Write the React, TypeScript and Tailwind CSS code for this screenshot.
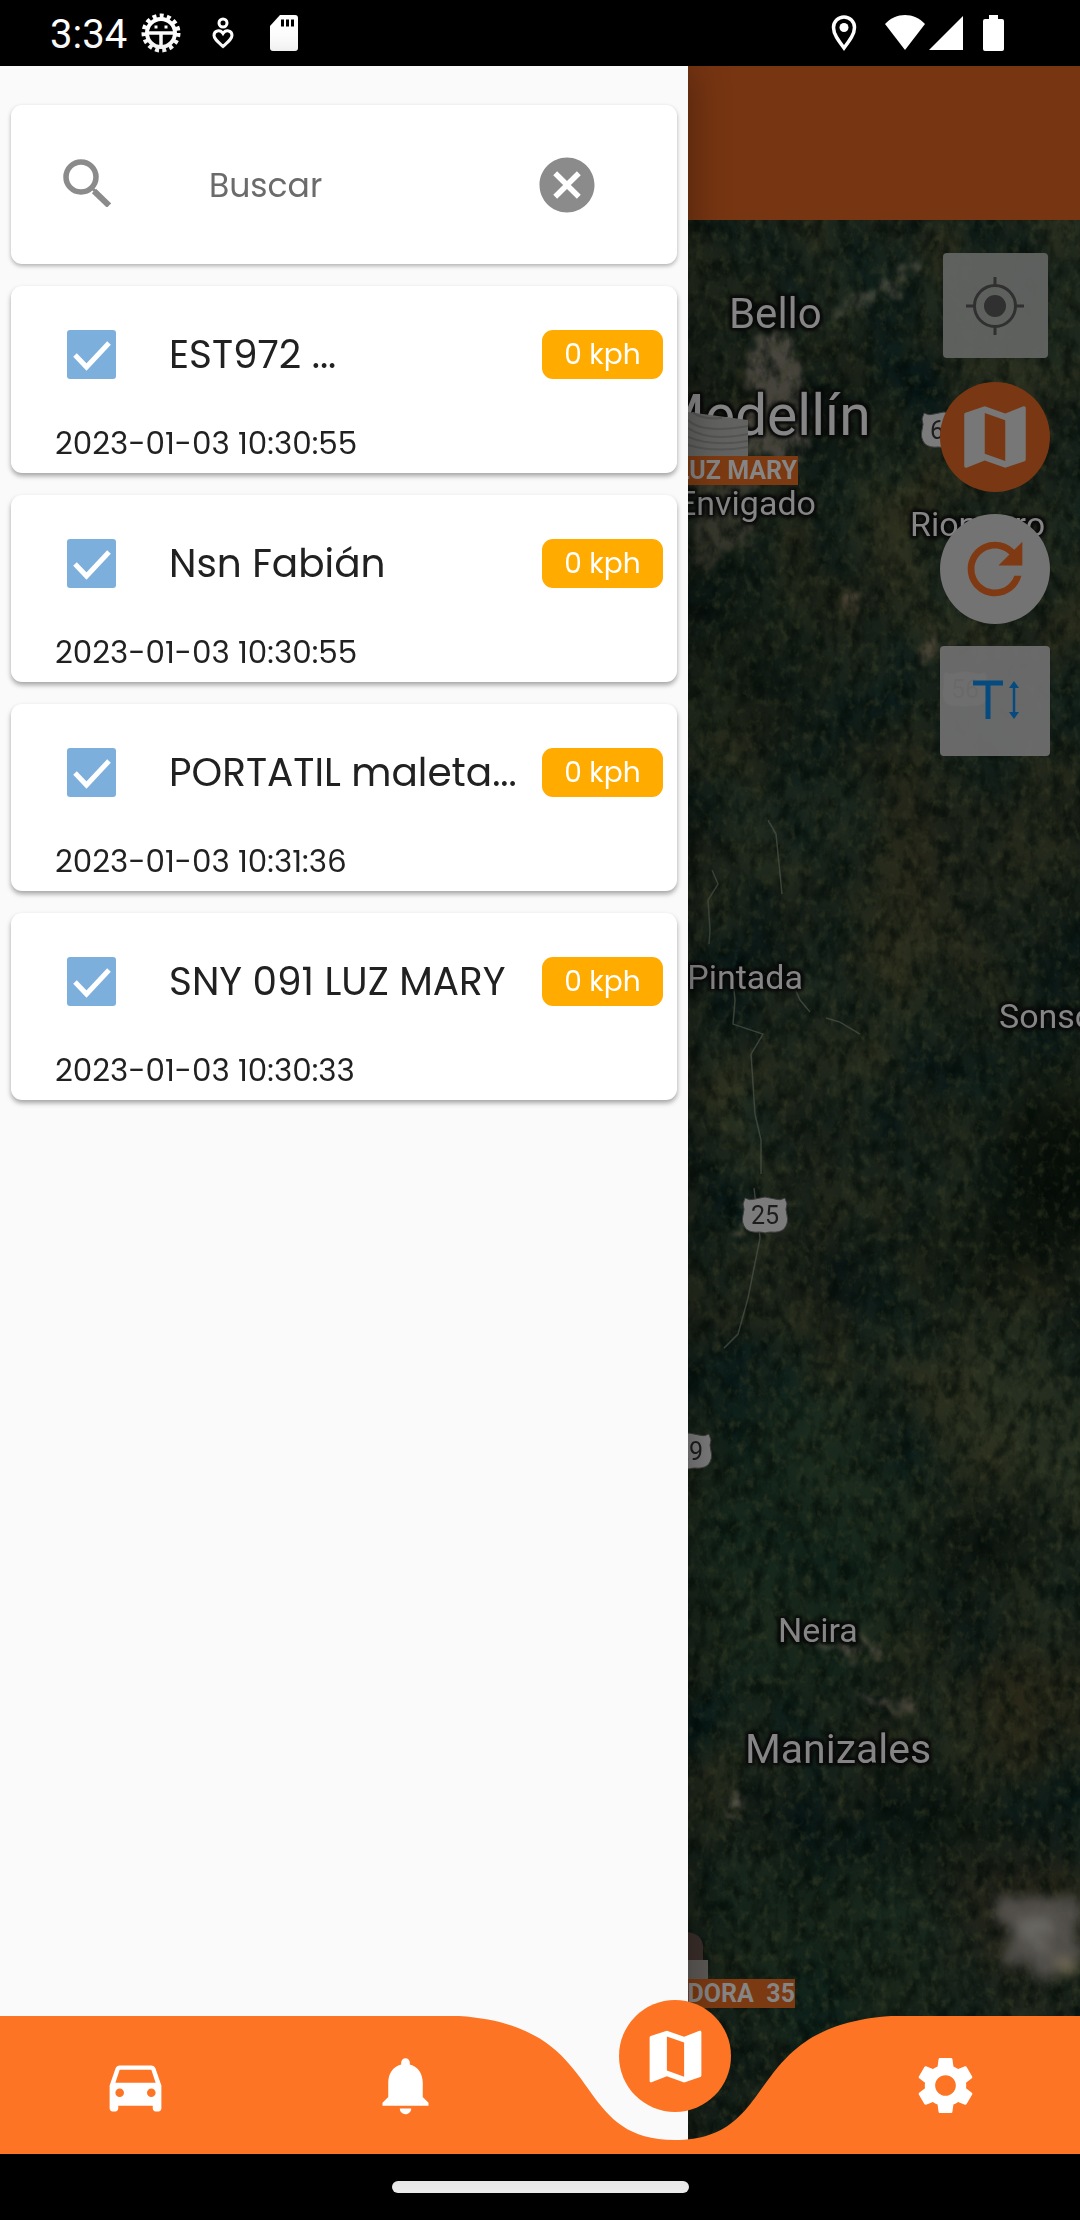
import { useState } from "react";
import type { ReactNode } from "react";
import { MdCancel, MdDirectionsCar, MdMap, MdNotifications, MdRefresh, MdSettings } from "react-icons/md";

type Device = { name: string; speed: string; time: string };

const devices: Device[] = [
  { name: "EST972 ...", speed: "0 kph", time: "2023-01-03 10:30:55" },
  { name: "Nsn Fabián", speed: "0 kph", time: "2023-01-03 10:30:55" },
  { name: "PORTATIL maleta...", speed: "0 kph", time: "2023-01-03 10:31:36" },
  { name: "SNY 091 LUZ MARY", speed: "0 kph", time: "2023-01-03 10:30:33" },
];

function StatusBar() {
  return (
    <header className="flex h-[66px] shrink-0 items-center justify-between bg-black pr-[76px] pl-[50px] text-white">
      <div className="flex items-center">
        <span className="pt-1 font-[Roboto,sans-serif] text-[40px] leading-none">3:34</span>
        <svg className="ml-[14px] size-10" viewBox="0 0 40 40" fill="none" stroke="currentColor">
          <circle cx="20" cy="20" r="17" strokeWidth="5" strokeDasharray="3.9 3.220" />
          <circle cx="20" cy="20" r="14" strokeWidth="4" />
          <path d="M7 20h26M20 20v13" strokeWidth="3.500" />
          <path d="M13.500 14h3M23.500 14h3" strokeWidth="3" />
        </svg>
        <svg className="ml-[31px] h-8 w-[22px]" viewBox="0 0 22 32" fill="none" stroke="currentColor" strokeWidth="3">
          <circle cx="11" cy="6" r="4" />
          <path d="M11 29.500C5 24 2 21.500 2 18.500c0-5 6-6.500 9-2 3-4.500 9-3 9 2 0 3-3 5.500-9 11z" />
        </svg>
        <svg className="ml-9 h-9 w-7" viewBox="0 0 28 36" fill="currentColor">
          <path d="M10 0h15a3 3 0 0 1 3 3v30a3 3 0 0 1-3 3H3a3 3 0 0 1-3-3V11z" />
          <path d="M11 4.500h3v7h-3zM16 4.500h3v7h-3zM21 4.500h3v7h-3z" fill="#000" />
        </svg>
      </div>
      <div className="flex items-center">
        <svg className="h-9 w-[26px]" viewBox="0 0 26 36" fill="none" stroke="currentColor">
          <path d="M13 33C7 25 2.500 19 2.500 12.500a10.500 10.500 0 0 1 21 0C23.500 19 19 25 13 33z" strokeWidth="3.500" />
          <circle cx="13" cy="12.500" r="4.500" fill="currentColor" stroke="none" />
        </svg>
        <svg className="ml-7 h-9 w-10" viewBox="0 0 40 36" fill="currentColor">
          <path d="M0 9C11-3 29-3 40 9L20 35z" />
        </svg>
        <svg className="ml-1 h-9 w-[34px]" viewBox="0 0 34 36" fill="currentColor">
          <path d="M34 1v34H0z" />
        </svg>
        <svg className="ml-5 h-9 w-[21px]" viewBox="0 0 21 36" fill="currentColor">
          <path d="M6 0h9v4h4a2 2 0 0 1 2 2v28a2 2 0 0 1-2 2H2a2 2 0 0 1-2-2V6a2 2 0 0 1 2-2h4z" />
        </svg>
      </div>
    </header>
  );
}

function SearchCard() {
  const [query, setQuery] = useState("");
  return (
    <form className="flex h-[159px] items-center rounded-[11px] bg-white pr-[77px] pl-[52px] shadow-[0_2px_4px_rgba(0,0,0,0.3)]">
      <svg className="mb-1 size-[48px] shrink-0" viewBox="0 0 48 48" fill="none" stroke="#8b8b8b">
        <circle cx="18" cy="18" r="15" strokeWidth="5.500" />
        <path d="M31 32l15 14.500" strokeWidth="6" />
        <path d="M28 28l4 4" strokeWidth="3" />
      </svg>
      <input
        type="text"
        aria-label="Buscar"
        placeholder="Buscar"
        value={query}
        onChange={(e) => setQuery(e.target.value)}
        className="ml-[98px] min-w-0 flex-1 bg-transparent pt-0.5 text-[33px] text-[#222] outline-none placeholder:text-[#6b6b6b]"
      />
      <button type="button" aria-label="Borrar" onClick={() => setQuery("")} className="ml-4 shrink-0 text-[66px] text-[#8b8b8b]">
        <MdCancel />
      </button>
    </form>
  );
}

function DeviceCard({ device }: { device: Device }) {
  return (
    <li className="rounded-[11px] bg-white pt-11 pr-[14px] pb-[5px] pl-11 shadow-[0_3px_5px_rgba(0,0,0,0.35)]">
      <label className="flex h-[49px] items-center">
        <input type="checkbox" defaultChecked className="peer sr-only" />
        <span className="ml-[12px] flex size-[49px] shrink-0 items-center justify-center rounded-[3px] bg-[#7dafdc] text-transparent peer-checked:text-white">
          <svg className="size-10" viewBox="0 0 40 40" fill="none" stroke="currentColor" strokeWidth="5">
            <path d="M3 20l11.500 12L37 8" />
          </svg>
        </span>
        <span className="ml-[53px] flex-1 text-[39px] leading-[49px] whitespace-nowrap text-[#212121]">{device.name}</span>
        <span className="flex h-[49px] w-[121px] shrink-0 items-center justify-center rounded-[11px] bg-[#ffab00] text-[28px] text-white">
          {device.speed}
        </span>
      </label>
      <time className="mt-10 block text-[31px] leading-[49px] text-[#212121]">{device.time}</time>
    </li>
  );
}

function Terrain() {
  return (
    <svg className="absolute inset-0 size-full" viewBox="0 0 392 1934" preserveAspectRatio="xMidYMin slice" aria-hidden="true">
      <defs>
        <filter id="relief" x="0" y="0" width="100%" height="100%" colorInterpolationFilters="sRGB">
          <feTurbulence type="fractalNoise" baseFrequency="0.012 0.009" numOctaves="7" seed="21" />
          <feColorMatrix values="0.22 0 0 0 -0.005  0.15 0.05 0 0 0.040  0.05 0.05 0 0 0.055  0 0 0 0 1" />
        </filter>
        <filter id="canopy" x="0" y="0" width="100%" height="100%" colorInterpolationFilters="sRGB">
          <feTurbulence type="fractalNoise" baseFrequency="0.08 0.05" numOctaves="5" seed="5" />
          <feColorMatrix values="0 0 0 0 0.01  0 0 0 0 0.04  0 0 0 0 0.025  2.6 0 0 0 -1.050" />
        </filter>
        <filter id="glints" x="0" y="0" width="100%" height="100%" colorInterpolationFilters="sRGB">
          <feTurbulence type="fractalNoise" baseFrequency="0.12 0.09" numOctaves="5" seed="14" />
          <feColorMatrix values="0 0 0 0 0.24  0 0 0 0 0.26  0 0 0 0 0.16  0 2.4 0 0 -1.220" />
        </filter>
        <filter id="rough" x="-20%" y="-20%" width="140%" height="140%" colorInterpolationFilters="sRGB">
          <feTurbulence type="fractalNoise" baseFrequency="0.07" numOctaves="5" seed="3" />
          <feDisplacementMap in="SourceGraphic" scale="44" xChannelSelector="R" yChannelSelector="G" />
          <feGaussianBlur stdDeviation="2" />
        </filter>
        <filter id="haze" x="-30%" y="-30%" width="160%" height="160%" colorInterpolationFilters="sRGB">
          <feTurbulence type="fractalNoise" baseFrequency="0.04" numOctaves="5" seed="9" />
          <feDisplacementMap in="SourceGraphic" scale="44" xChannelSelector="R" yChannelSelector="G" />
          <feGaussianBlur stdDeviation="6" />
        </filter>
        <filter id="soft" x="-60%" y="-20%" width="220%" height="140%" colorInterpolationFilters="sRGB">
          <feGaussianBlur stdDeviation="30" />
        </filter>
      </defs>
      <rect width="392" height="1934" fill="#1a281e" />
      <rect width="392" height="1934" filter="url(#relief)" />
      <g filter="url(#soft)">
        <ellipse cx="60" cy="430" rx="60" ry="80" fill="#07120d" opacity="0.5" />
        <ellipse cx="150" cy="210" rx="40" ry="40" fill="#07120d" opacity="0.5" />
        <ellipse cx="270" cy="640" rx="80" ry="100" fill="#2a2819" opacity="0.5" />
        <ellipse cx="370" cy="950" rx="60" ry="90" fill="#050c07" opacity="0.9" />
        <ellipse cx="290" cy="1040" rx="60" ry="40" fill="#080f09" opacity="0.6" />
        <ellipse cx="330" cy="1190" rx="80" ry="90" fill="#2f3623" opacity="0.7" />
        <ellipse cx="110" cy="1330" rx="120" ry="160" fill="#13281d" opacity="0.6" />
        <ellipse cx="290" cy="1330" rx="90" ry="25" fill="#070e08" opacity="0.6" />
        <ellipse cx="330" cy="1480" rx="50" ry="80" fill="#302b19" opacity="0.6" />
        <ellipse cx="130" cy="1740" rx="120" ry="110" fill="#11251a" opacity="0.6" />
        <ellipse cx="250" cy="1600" rx="60" ry="40" fill="#0a1711" opacity="0.8" />
        <ellipse cx="330" cy="1700" rx="60" ry="70" fill="#2a2419" opacity="0.7" />
      </g>
      <g filter="url(#rough)">
        <path d="M72 118l26-10 22 80-6 50-56-6 2-70z" fill="#5a524b" opacity="0.7" />
        <path d="M6 250h66l-10 70-50 30z" fill="#4b453c" opacity="0.55" />
        <path d="M140 92l40-18 30-24 26-13-22 28-44 26z" fill="#6a6657" opacity="0.5" />
        <path d="M150 385l14-22 6 12-12 22zM234 430l14-20 6 20-14 16z" fill="#6a5c4b" opacity="0.6" />
        <path d="M135 1417l16 6 30-8 8 18-40 6zM155 1474l50 4 20 10-40 0z" fill="#6a6055" opacity="0.6" />
        <path d="M36 1585l14-8 6 14-12 12z" fill="#706a5e" opacity="0.6" />
        <path d="M46 1005l14 4-4 10-14-4z" fill="#7a7052" opacity="0.6" />
      </g>
      <rect width="392" height="1934" filter="url(#canopy)" opacity="0.6" />
      <rect width="392" height="1934" filter="url(#glints)" opacity="0.55" />
      <g filter="url(#haze)">
        <path d="M308 1686l46-10 40 6v66l-46 8-30-24z" fill="#5a5753" opacity="0.85" />
        <path d="M330 1705l24-12 18 22-26 16z" fill="#7d7b77" opacity="0.6" />
        <path d="M368 1740l24-16v30l-16 10z" fill="#857a60" opacity="0.7" />
      </g>
      <path
        d="M80 600l8 14 6 60M24 650l6 14-10 16 2 30-1 14M62 750l24 8 18 4 8 18 10 12M138 798l14 4 20 12M44 750l3 30-2 24 30 10-12 20 4 60 6 26v34M66 968l6 50-12 60-10 36-14 14"
        fill="none"
        stroke="#4c5249"
        strokeWidth="1.500"
        opacity="0.7"
      />
    </svg>
  );
}

const labelBase =
  "absolute whitespace-nowrap font-[Roboto,sans-serif] leading-none text-[#858585] [text-shadow:0_0_3px_#0c0c0c,0_0_5px_#0c0c0c,2px_2px_3px_#0c0c0c,-2px_-2px_3px_#0c0c0c,2px_-2px_3px_#0c0c0c,-2px_2px_3px_#0c0c0c]";

function Place({ className, children }: { className: string; children: ReactNode }) {
  return <span className={`${labelBase} ${className}`}>{children}</span>;
}

function Shield({ className, children }: { className: string; children: ReactNode }) {
  return (
    <span className={`absolute flex h-[38px] w-[48px] items-center justify-center ${className}`}>
      <svg className="absolute inset-0 size-full" viewBox="0 0 46 38" fill="#7b7b7b" stroke="#3c3c3c" strokeWidth="1">
        <path d="M3 2q5 3 10 1 5-1 10-2 5 1 10 2 5 2 10-1l2 6q-2 5 0 11 2 8-3 14-5 4-13 3-3 0-6 1-3-1-6-1-8 1-13-3-5-6-3-14 2-6 0-11z" />
      </svg>
      <span className="relative pt-px font-[Roboto,sans-serif] text-[25px] leading-none text-[#1d1d1d]">{children}</span>
    </span>
  );
}

function MapPanel() {
  return (
    <section aria-label="Mapa" className="relative flex-1 overflow-hidden bg-[#1a281e]">
      <Terrain />
      <Place className="top-[73px] left-[41px] text-[42px]">Bello</Place>
      <Place className="top-[167px] left-[-33px] text-[57px]">Medellín</Place>
      <svg className="absolute top-[192px] left-0 h-[44px] w-[60px]" viewBox="0 0 60 44">
        <path d="M0 0l60 8v36H0z" fill="#626260" />
        <path d="M0 8q14 14 60 6M0 16q20 14 60 6M0 25q24 10 60 4M0 33q26 8 60 2M4 0q10 8 30 6" fill="none" stroke="#545454" strokeWidth="2" />
      </svg>
      <Place className="top-[266px] left-[-11px] text-[34px]">Envigado</Place>
      <span className="absolute top-[236px] right-[282px] bg-[#7c3a12] px-px font-[Roboto,sans-serif] text-[25px] leading-[29px] font-bold whitespace-nowrap text-[#858585]">
        LUZ MARY
      </span>
      <Shield className="top-[191px] left-[232px]">60</Shield>
      <Place className="top-[287px] left-[222px] text-[34px]">Rionegro</Place>
      <Place className="top-[740px] left-[-46px] text-[34px]">La Pintada</Place>
      <Place className="top-[779px] left-[311px] text-[34px]">Sonsón</Place>
      <Shield className="top-[450px] left-[253px]">56</Shield>
      <Shield className="top-[976px] left-[53px]">25</Shield>
      <Shield className="top-[1212px] left-[-23px]">29</Shield>
      <Place className="top-[1393px] left-[90px] text-[34px]">Neira</Place>
      <Place className="top-[1509px] left-[57px] text-[41px]">Manizales</Place>
      <svg className="absolute top-[1712px] left-0 h-[47px] w-5" viewBox="0 0 20 47">
        <path d="M0 0q14 2 15 14v14H0z" fill="#3a2e2a" />
        <path d="M0 28h20v19H0z" fill="#5d5956" />
      </svg>
      <span className="absolute top-[1759px] right-[285px] bg-[#7c3a12] pl-px font-[Roboto,sans-serif] text-[25px] leading-[29px] font-bold whitespace-pre text-[#858585]">
        DORA  35
      </span>

      <div className="absolute top-[33px] right-[30px] flex flex-col items-center">
        <button type="button" aria-label="Mi ubicación" className="flex size-[105px] items-center justify-center rounded-[4px] bg-[#626462]/95 text-[#303030]">
          <svg className="size-[60px]" viewBox="0 0 60 60" fill="none" stroke="currentColor" strokeWidth="3">
            <circle cx="30" cy="30" r="20.500" />
            <circle cx="30" cy="30" r="11" fill="currentColor" stroke="none" />
            <path d="M30 1v9M30 50v9M1 30h9M50 30h9" />
          </svg>
        </button>
        <button type="button" aria-label="Tipo de mapa" className="mt-6 flex size-[110px] items-center justify-center rounded-full bg-[#793813] text-[82px] text-[#777]">
          <MdMap />
        </button>
        <button type="button" aria-label="Actualizar" className="mt-[22px] flex size-[110px] items-center justify-center rounded-full bg-[#737373] text-[82px] text-[#803a13]">
          <MdRefresh />
        </button>
        <button type="button" aria-label="Tamaño del texto" className="mt-[22px] flex size-[110px] items-center justify-center rounded-[4px] bg-[#6e6e6e]/95">
          <svg className="size-[60px]" viewBox="0 0 60 60" fill="none" stroke="#054b80">
            <path d="M8 12h30M23 12v36" strokeWidth="5" />
            <path d="M49 14v30" strokeWidth="2.500" />
            <path d="M49 10l5 7H44zM49 48l5-7H44z" fill="#054b80" stroke="none" />
          </svg>
        </button>
      </div>
    </section>
  );
}

function BottomNav() {
  const item = "flex flex-1 items-center justify-center text-[69px] text-white";
  return (
    <nav className="absolute inset-x-0 bottom-0 z-20 h-[138px]">
      <svg className="absolute inset-0 size-full" viewBox="0 0 1080 138" preserveAspectRatio="none" aria-hidden="true">
        <path d="M0 0H459C610 10 567 124 675 124S740 10 891 0H1080V138H0z" fill="#fd7424" />
      </svg>
      <div className="relative flex h-full">
        <button type="button" aria-label="Vehículos" className={item}>
          <MdDirectionsCar />
        </button>
        <button type="button" aria-label="Alertas" className={item}>
          <MdNotifications />
        </button>
        <div className="flex flex-1 justify-center">
          <button type="button" aria-label="Mapa" className="-mt-4 flex size-[112px] items-center justify-center rounded-full bg-[#fd7424] text-[69px] text-white">
            <MdMap />
          </button>
        </div>
        <button type="button" aria-label="Ajustes" className={item}>
          <MdSettings />
        </button>
      </div>
    </nav>
  );
}

export default function App() {
  return (
    <div className="flex min-h-screen flex-col bg-black font-[Poppins,Inter,sans-serif]">
      <StatusBar />
      <main className="relative flex flex-1">
        <aside className="relative z-10 w-[63.7%] shrink-0 bg-[#fafafa] px-[11px] pt-[39px] shadow-[4px_0_36px_rgba(0,0,0,0.3)]">
          <SearchCard />
          <ul className="mt-[22px] flex flex-col gap-[22px]">
            {devices.map((device) => (
              <DeviceCard key={device.name} device={device} />
            ))}
          </ul>
        </aside>
        <div className="flex min-w-0 flex-1 flex-col">
          <div className="h-[154px] bg-[#773512]" />
          <MapPanel />
        </div>
        <BottomNav />
      </main>
      <footer className="flex h-[66px] shrink-0 items-center justify-center bg-black">
        <div className="h-3 w-[297px] rounded-full bg-[#ececec]" />
      </footer>
    </div>
  );
}
